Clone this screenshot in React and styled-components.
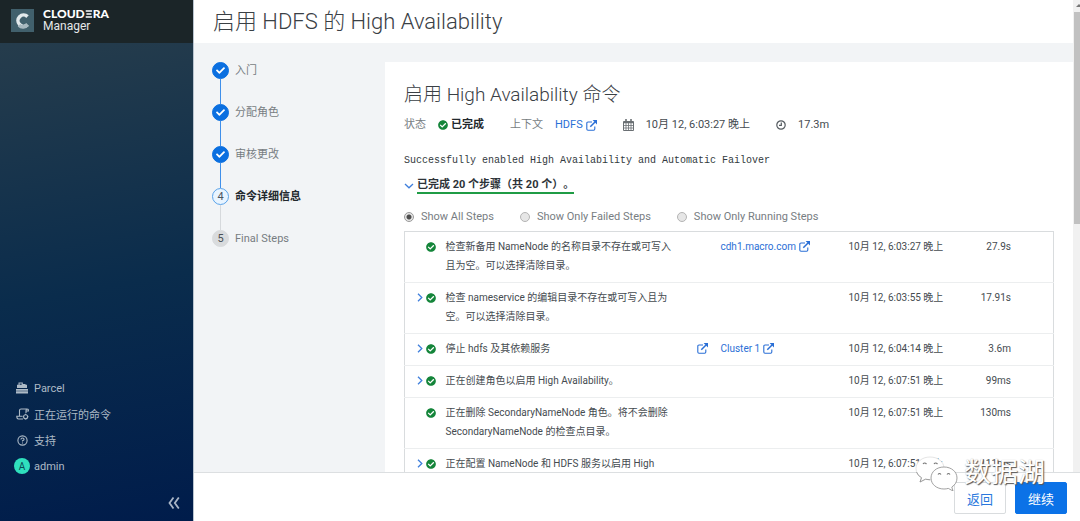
import React, { useState } from 'react';
import styled, { createGlobalStyle } from 'styled-components';
import { FaCheck, FaCheckCircle } from 'react-icons/fa';

const GlobalStyle = createGlobalStyle`
    * {
        box-sizing: border-box;
    }

    body {
        margin: 0;
        font-family: Roboto, 'Noto Sans CJK SC', sans-serif;
        font-size: 11px;
        color: #454b50;
        background: #fff;
    }
`;

const Shell = styled.div`
    position: relative;
    display: flex;
    height: 100vh;
    overflow: hidden;
`;

const Sidebar = styled.nav`
    flex: 0 0 194px;
    display: flex;
    flex-direction: column;
    border-right: 1px solid #b9c4cf;
    background: linear-gradient(170deg, #2a3f4c 0%, #0a2c4c 55%, #001c4b 100%);
`;

const Brand = styled.a`
    display: flex;
    align-items: center;
    gap: 9px;
    height: 43px;
    padding: 0 11px 3px;
    background: #1b2528;
    color: #fff;
    text-decoration: none;
`;

const BrandText = styled.span`
    display: flex;
    flex-direction: column;
    font-size: 12px;
    line-height: 13px;
    color: #e4e8ea;
`;

const BrandName = styled.span`
    display: flex;
    align-items: center;
    font-family: Lato, Roboto, sans-serif;
    font-size: 12px;
    font-weight: 900;
    color: #fff;
`;

const Menu = styled.ul`
    flex: 1;
    display: flex;
    flex-direction: column;
    justify-content: flex-end;
    margin: 0;
    padding: 0 0 18px 14px;
    list-style: none;
`;

const MenuLink = styled.a`
    display: flex;
    align-items: center;
    gap: 4px;
    height: 26px;
    color: #adbac6;
    text-decoration: none;
`;

const MenuIcon = styled.span`
    display: flex;
    justify-content: center;
    width: 16px;
`;

const Avatar = styled.span`
    display: flex;
    align-items: center;
    justify-content: center;
    width: 16px;
    height: 16px;
    border-radius: 50%;
    background: #2fe0bd;
    color: #0b4a55;
    font-size: 10px;
`;

const Collapse = styled.button`
    align-self: flex-end;
    display: flex;
    margin: 0 13px 12px 0;
    padding: 0;
    border: 0;
    background: none;
    color: #a9b5c6;
`;

const Main = styled.main`
    flex: 1;
    min-width: 0;
    display: flex;
    flex-direction: column;
`;

const Viewport = styled.div`
    flex: 1;
    min-height: 0;
    display: flex;
`;

const Page = styled.div`
    flex: 1;
    min-width: 0;
    display: flex;
    flex-direction: column;
    overflow: hidden;
    background: #f2f4f6;
`;

const Track = styled.div`
    flex: 0 0 7px;
    display: flex;
    flex-direction: column;
    align-items: flex-end;
    background: #f1f1f1;
`;

const TrackArrow = styled.svg`
    flex: 0 0 12px;
    width: 6px;
`;

const Thumb = styled.div`
    flex: 0 0 45%;
    width: 6px;
    background: #c1c1c1;
`;

const PageTitle = styled.h1`
    flex: none;
    margin: 0;
    padding: 0 19px;
    height: 43px;
    background: #fff;
    font-size: 22px;
    line-height: 43px;
    font-weight: 300;
    color: #3a4045;
`;

const Columns = styled.div`
    flex: 1;
    display: flex;
    align-items: flex-start;
`;

const Steps = styled.ol`
    flex: 0 0 191px;
    margin: 0;
    padding: 19px 0 0 18px;
    list-style: none;
`;

const Step = styled.li`
    display: flex;
    gap: 6px;
    line-height: 17px;
    font-weight: ${props => props.$state === 'current' ? 700 : 400};
    color: ${props => props.$state === 'current' ? '#22282d' : '#777d82'};
`;

const StepRail = styled.span`
    display: flex;
    flex-direction: column;
    align-items: center;
`;

const bulletColors = {
    done: { bg: '#0b6fe0', border: '#0b6fe0', text: '#fff' },
    current: { bg: '#e8f4ff', border: '#5aa3ea', text: '#4a5560' },
    next: { bg: '#d9dbdd', border: '#d9dbdd', text: '#4a5055' },
};

const Bullet = styled.span`
    display: flex;
    align-items: center;
    justify-content: center;
    width: 17px;
    height: 17px;
    border: 1px solid ${props => bulletColors[props.$state].border};
    border-radius: 50%;
    background: ${props => bulletColors[props.$state].bg};
    color: ${props => bulletColors[props.$state].text};
    font-weight: 400;
`;

const Connector = styled.span`
    width: 1px;
    height: 25px;
    background: ${props => props.$active ? '#3f8fea' : '#d6d9dc'};
`;

const Card = styled.section`
    flex: 1;
    min-width: 0;
    margin-top: 19px;
    padding: 18px 19px 20px;
    background: #fff;
`;

const CardTitle = styled.h2`
    margin: 0;
    font-size: 19px;
    line-height: 30px;
    font-weight: 300;
    color: #3a4045;
`;

const Summary = styled.div`
    display: flex;
    align-items: center;
    margin-top: 6px;
    line-height: 18px;
`;

const Fact = styled.span`
    display: flex;
    align-items: center;
    gap: 12px;
    margin-right: 26px;
`;

const Label = styled.span`
    color: #777d82;
`;

const Status = styled.strong`
    display: flex;
    align-items: center;
    gap: 3px;
    color: #22282d;
`;

const TextLink = styled.a`
    display: inline-flex;
    align-items: center;
    gap: 3px;
    min-height: 18px;
    color: #2a6fd6;
    text-decoration: none;
    vertical-align: top;
`;

const Message = styled.pre`
    margin: 18px 0 0;
    font-family: 'Liberation Mono', monospace;
    font-size: 10px;
    line-height: 18px;
    color: #333a40;
`;

const Progress = styled.button`
    display: flex;
    align-items: center;
    gap: 3px;
    margin: 7px 0 0;
    padding: 0;
    border: 0;
    background: none;
    font: inherit;
    font-weight: 700;
    color: #2d3338;
`;

const ProgressText = styled.span`
    border-bottom: 2px solid #1f9c45;
    line-height: 15px;
    text-spacing-trim: space-all;
`;

const Filters = styled.div`
    display: flex;
    gap: 26px;
    margin: 14px 0 5px;
    line-height: 18px;
    color: #777d82;
`;

const FilterLabel = styled.label`
    display: flex;
    align-items: center;
    gap: 7px;
`;

const Radio = styled.input`
    appearance: none;
    width: 10px;
    height: 10px;
    margin: 0;
    border: 1px solid #b4b4b4;
    border-radius: 50%;
    background: #e6e6e6;

    &:checked {
        border-color: #999;
        background: radial-gradient(circle, #4d4d4d 0 2px, #e6e6e6 3px);
    }
`;

const StepTable = styled.table`
    width: 100%;
    table-layout: fixed;
    border-collapse: collapse;
    border: 1px solid #d9dcde;
    font-size: 10px;
    line-height: 19px;
`;

const Col = styled.col`
    width: ${props => props.$width ? props.$width + 'px' : 'auto'};
`;

const Cell = styled.td`
    padding: 5px 0 7px;
    border-bottom: 1px solid #eceeef;
    vertical-align: top;
    white-space: nowrap;
`;

const DescriptionCell = styled(Cell)`
    padding-right: 22px;
    white-space: normal;
`;

const DurationCell = styled(Cell)`
    padding-right: 42px;
    text-align: right;
`;

const RowIcons = styled.span`
    display: flex;
    align-items: center;
    justify-content: flex-end;
    gap: 3px;
    height: 19px;
    padding-right: 10px;
`;

const Footer = styled.footer`
    flex: none;
    display: flex;
    justify-content: flex-end;
    gap: 9px;
    height: 49px;
    padding: 9px 13px 0;
    border-top: 1px solid #dcdfe1;
    background: #fff;
`;

const Button = styled.button`
    height: 32px;
    padding: 0 12px;
    border: 1px solid ${props => props.$primary ? '#0b72e7' : '#d9dcde'};
    border-radius: 2px;
    background: ${props => props.$primary ? '#0b72e7' : '#fff'};
    color: ${props => props.$primary ? '#fff' : '#2a78dd'};
    font: inherit;
    font-size: 13px;
`;

const Watermark = styled.div`
    position: absolute;
    right: 35px;
    bottom: 28px;
    display: flex;
    align-items: center;
    gap: 6px;
    color: #fff;
    font-size: 27px;
    line-height: 40px;
    text-shadow: 1px 1px 1px #555, 0 0 1px #bbb;
    pointer-events: none;
`;

const Logo = () => (
    <svg width="23" height="23" viewBox="0 0 23 23">
        <rect width="23" height="23" fill="#41606c" />
        <path d="M16.5 7.6A5.6 5.6 0 1 0 16.5 15.6" fill="none" stroke="#e3eaec" strokeWidth="3.6" />
        <path d="M8 16.2A5.6 5.6 0 0 0 16.5 15.6" fill="none" stroke="#a7b8bf" strokeWidth="3.6" />
    </svg>
);

const Epsilon = () => (
    <svg width="8" height="8" viewBox="0 0 8 8" stroke="#fff" strokeWidth="1.5">
        <path d="M.7 .9h6.4M1.4 4h5M.7 7.1h6.4" />
    </svg>
);

const ParcelIcon = () => (
    <svg width="12" height="12" viewBox="0 0 12 12" fill="currentColor">
        <path d="M2.500 2.800V.6H6.800V2H9.500V2.800H11V6H1V2.800zM3.600 2.800H5.700V1.600H3.600zM0 7h12v1.800H0zM0 9.300h12v2.300H0z" />
    </svg>
);

const CommandsIcon = () => (
    <svg width="13" height="12" viewBox="0 0 13 12" fill="none" stroke="currentColor" strokeWidth="1.1">
        <path d="M3.5 8V2.4Q3.5 1 5 1h6.5Q10 1 10 2.6V5M10 3h2.4V1.8Q12.2 1 11.4 1M6.5 8.3H.8Q.8 11 2.5 11H7" />
        <circle cx="9.6" cy="8.7" r="2" />
        <path d="M9.6 5.8v1M9.6 10.6v1M6.8 8.7h1M11.4 8.7h1" />
    </svg>
);

const HelpIcon = () => (
    <svg width="11" height="11" viewBox="0 0 11 11" fill="none" stroke="currentColor" strokeWidth="1.1">
        <circle cx="5.5" cy="5.5" r="4.6" />
        <path d="M3.9 4.5Q4 3 5.5 3t1.6 1.3Q7.1 5.2 5.5 5.7v.8M5.5 7.4v1" />
    </svg>
);

const ExternalIcon = () => (
    <svg width="11" height="11" viewBox="0 0 11 11" fill="none" stroke="#2a6fd6" strokeWidth="1.1">
        <path d="M6 2H2Q.8 2 .8 3.2V9Q.8 10.2 2 10.2H7.6Q8.8 10.2 8.8 9V6.4" />
        <path d="M4.3 6.7L9 2" strokeWidth="1.5" />
        <path d="M6.600 0H11V4.400z" fill="#2a6fd6" stroke="none" />
    </svg>
);

const CalendarIcon = () => (
    <svg width="11" height="12" viewBox="0 0 11 12" fill="none" stroke="#6b7074">
        <path d="M.5 2.500H10.500V11.500H.5z" />
        <path d="M.5 3.500H10.500M3 0V3M8 0V3" strokeWidth="1.6" />
        <path d="M3 4V11.500M5.500 4V11.500M8 4V11.500M.5 6.500H10.500M.5 9H10.500" strokeWidth=".8" />
    </svg>
);

const ClockIcon = () => (
    <svg width="10" height="10" viewBox="0 0 10 10" fill="none" stroke="#555b60" strokeWidth="1.2">
        <circle cx="5" cy="5" r="4.2" />
        <path d="M5.3 2.4V5.4H3" />
    </svg>
);

const Chevron = ({ down }) => (
    <svg width={down ? 10 : 6} height={down ? 6 : 9} viewBox={down ? '0 0 10 6' : '0 0 6 9'}
        fill="none" stroke="#3f7fdc" strokeWidth="1.3">
        <path d={down ? 'M1 1L5 4.8L9 1' : 'M1 .8L4.8 4.5L1 8.2'} />
    </svg>
);

const ChatIcon = () => (
    <svg width="44" height="36" viewBox="0 0 44 36" fill="#fff" stroke="#8a8a8a" strokeWidth=".8">
        <path d="M16 2C8 2 2 7 2 13.500c0 4 2 7 5.500 9.200L6 27l5.500-2.800c1.500.4 3 .6 4.500.6 8 0 14-5 14-11.500S24 2 16 2z" stroke="#ddd" />
        <path d="M2.500 17Q4 21 7.500 22.700L6 27L11.500 24.200L16 24.800" fill="none" />
        <path d="M30 12c-7.500 0-13 4.800-13 11s5.500 11 13 11c1.500 0 3-.2 4.300-.6L39 36l-1.200-4C41 30 43 27 43 23c0-6.200-5.500-11-13-11z" />
        <path d="M9 9q1.500-2 3.500 0M20 9q1.500-2 3.500 0M24 19.500q1.500-2 3 0M33 19.500q1.500-2 3 0" fill="none" stroke="#777" strokeWidth="1.2" />
    </svg>
);

const wizardSteps = [
    { name: '入门', state: 'done' },
    { name: '分配角色', state: 'done' },
    { name: '审核更改', state: 'done' },
    { name: '命令详细信息', state: 'current' },
    { name: 'Final Steps', state: 'next' },
];

const filters = ['Show All Steps', 'Show Only Failed Steps', 'Show Only Running Steps'];

const commandSteps = [
    { text: '检查新备用 NameNode 的名称目录不存在或可写入且为空。可以选择清除目录。', link: 'cdh1.macro.com', time: '6:03:27', duration: '27.9s' },
    { text: '检查 nameservice 的编辑目录不存在或可写入且为空。可以选择清除目录。', nested: true, time: '6:03:55', duration: '17.91s' },
    { text: '停止 hdfs 及其依赖服务', nested: true, external: true, link: 'Cluster 1', time: '6:04:14', duration: '3.6m' },
    { text: '正在创建角色以启用 High Availability。', nested: true, time: '6:07:51', duration: '99ms' },
    { text: '正在删除 SecondaryNameNode 角色。将不会删除 SecondaryNameNode 的检查点目录。', time: '6:07:51', duration: '130ms' },
    { text: '正在配置 NameNode 和 HDFS 服务以启用 High Availability。', nested: true, time: '6:07:51', duration: '111ms' },
];

const App = () => {
    const [filter, setFilter] = useState(filters[0]);

    return (
        <Shell>
            <GlobalStyle />
            <Sidebar>
                <Brand href="#home">
                    <Logo />
                    <BrandText>
                        <BrandName>CLOUD<Epsilon />RA</BrandName>
                        <span>Manager</span>
                    </BrandText>
                </Brand>
                <Menu>
                    <li><MenuLink href="#parcel"><MenuIcon><ParcelIcon /></MenuIcon>Parcel</MenuLink></li>
                    <li><MenuLink href="#commands"><MenuIcon><CommandsIcon /></MenuIcon>正在运行的命令</MenuLink></li>
                    <li><MenuLink href="#support"><MenuIcon><HelpIcon /></MenuIcon>支持</MenuLink></li>
                    <li><MenuLink href="#admin"><Avatar>A</Avatar>admin</MenuLink></li>
                </Menu>
                <Collapse aria-label="Collapse">
                    <svg width="12" height="12" viewBox="0 0 12 12" fill="none" stroke="currentColor" strokeWidth="1.8">
                        <path d="M5.500 .5L1.500 6L5.500 11.500M10.800 .5L6.800 6L10.800 11.500" />
                    </svg>
                </Collapse>
            </Sidebar>

            <Main>
                <Viewport>
                    <Page>
                        <PageTitle>启用 HDFS 的 High Availability</PageTitle>
                        <Columns>
                            <Steps>
                                {wizardSteps.map((step, i) => (
                                    <Step key={step.name} $state={step.state}>
                                        <StepRail>
                                            <Bullet $state={step.state}>
                                                {step.state === 'done' ? <FaCheck size={9} /> : i + 1}
                                            </Bullet>
                                            {i < wizardSteps.length - 1 &&
                                                <Connector $active={step.state === 'done'} />}
                                        </StepRail>
                                        {step.name}
                                    </Step>
                                ))}
                            </Steps>

                            <Card>
                                <CardTitle>启用 High Availability 命令</CardTitle>
                                <Summary>
                                    <Fact>
                                        <Label>状态</Label>
                                        <Status><FaCheckCircle size={10} color="#14853a" />已完成</Status>
                                    </Fact>
                                    <Fact>
                                        <Label>上下文</Label>
                                        <TextLink href="#hdfs">HDFS<ExternalIcon /></TextLink>
                                    </Fact>
                                    <Fact><CalendarIcon />10月 12, 6:03:27 晚上</Fact>
                                    <Fact><ClockIcon />17.3m</Fact>
                                </Summary>
                                <Message>Successfully enabled High Availability and Automatic Failover</Message>
                                <Progress>
                                    <Chevron down />
                                    <ProgressText>已完成 20 个步骤（共 20 个）。</ProgressText>
                                </Progress>
                                <Filters>
                                    {filters.map(name => (
                                        <FilterLabel key={name}>
                                            <Radio type="radio" name="filter" checked={filter === name}
                                                onChange={() => setFilter(name)} />
                                            {name}
                                        </FilterLabel>
                                    ))}
                                </Filters>
                                <StepTable>
                                    <colgroup>
                                        <Col $width={41} />
                                        <Col />
                                        <Col $width={24} />
                                        <Col $width={128} />
                                        <Col $width={105} />
                                        <Col $width={100} />
                                    </colgroup>
                                    <tbody>
                                        {commandSteps.map(step => (
                                            <tr key={step.text}>
                                                <Cell>
                                                    <RowIcons>
                                                        {step.nested && <Chevron />}
                                                        <FaCheckCircle size={10} color="#14853a" />
                                                    </RowIcons>
                                                </Cell>
                                                <DescriptionCell>{step.text}</DescriptionCell>
                                                <Cell>
                                                    {step.external &&
                                                        <TextLink href="#details" aria-label="Details"><ExternalIcon /></TextLink>}
                                                </Cell>
                                                <Cell>
                                                    {step.link &&
                                                        <TextLink href="#context">{step.link}<ExternalIcon /></TextLink>}
                                                </Cell>
                                                <Cell>10月 12, {step.time} 晚上</Cell>
                                                <DurationCell>{step.duration}</DurationCell>
                                            </tr>
                                        ))}
                                    </tbody>
                                </StepTable>
                            </Card>
                        </Columns>
                    </Page>
                    <Track>
                        <TrackArrow viewBox="0 0 6 12"><path d="M2 7L5 4L6 5V7z" fill="#777" /></TrackArrow>
                        <Thumb />
                    </Track>
                </Viewport>
                <Footer>
                    <Button>返回</Button>
                    <Button $primary>继续</Button>
                </Footer>
            </Main>
            <Watermark><ChatIcon />数据湖</Watermark>
        </Shell>
    );
};

export default App;
